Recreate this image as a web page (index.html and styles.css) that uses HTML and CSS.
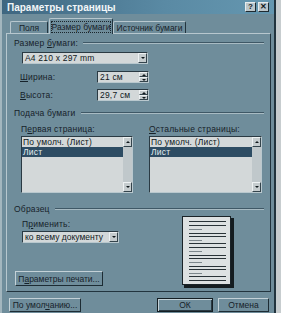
FILE: index.html
```html
<!DOCTYPE html>
<html lang="ru">
<head>
    <meta charset="UTF-8">
    <title>Параметры страницы</title>
    <link rel="stylesheet" href="styles.css">
</head>
<body>
<div class="dlg">
    <div class="titlebar">
        <span class="title">Параметры страницы</span>
        <div class="title-btns">
            <span class="tbtn">?</span>
            <span class="tbtn">&#x2715;</span>
        </div>
    </div>

    <div class="tabs">
        <div class="tab tab-fields">Поля</div>
        <div class="tab tab-active"><span class="focus">Размер бумаги</span></div>
        <div class="tab tab-source">Источник бумаги</div>
    </div>

    <div class="panel">
        <div class="group-head"><span>Размер <u>б</u>умаги:</span><span class="etch"></span></div>
        <div class="combo combo-size">
            <span class="combo-text">A4 210 x 297 mm</span>
            <span class="arrow-btn"><span class="tri-down"></span></span>
        </div>

        <div class="field-row row-width">
            <span class="field-label"><u>Ш</u>ирина:</span>
            <div class="spin">
                <span class="spin-text">21 см</span>
                <span class="spin-btns"><span class="sb"><span class="tri-up"></span></span><span class="sb"><span class="tri-down"></span></span></span>
            </div>
        </div>
        <div class="field-row row-height">
            <span class="field-label"><u>В</u>ысота:</span>
            <div class="spin">
                <span class="spin-text">29,7 см</span>
                <span class="spin-btns"><span class="sb"><span class="tri-up"></span></span><span class="sb"><span class="tri-down"></span></span></span>
            </div>
        </div>

        <div class="group-head head-feed"><span>Подача бумаги</span><span class="etch"></span></div>
        <div class="lists">
            <div class="list-col">
                <div class="list-label">П<u>е</u>рвая страница:</div>
                <div class="listbox">
                    <div class="items">
                        <div class="item">По умолч. (Лист)</div>
                        <div class="item item-sel">Лист</div>
                    </div>
                    <div class="vscroll">
                        <span class="sb"><span class="tri-up"></span></span>
                        <span class="track"></span>
                        <span class="sb"><span class="tri-down"></span></span>
                    </div>
                </div>
            </div>
            <div class="list-col list-right">
                <div class="list-label"><u>О</u>стальные страницы:</div>
                <div class="listbox listbox-wide">
                    <div class="items">
                        <div class="item">По умолч. (Лист)</div>
                        <div class="item item-sel">Лист</div>
                    </div>
                    <div class="vscroll">
                        <span class="sb"><span class="tri-up"></span></span>
                        <span class="track"></span>
                        <span class="sb"><span class="tri-down"></span></span>
                    </div>
                </div>
            </div>
        </div>

        <div class="group-head head-sample"><span>Образец</span><span class="etch"></span></div>
        <div class="sample">
            <div class="sample-left">
                <div class="apply-label">П<u>р</u>именить:</div>
                <div class="combo combo-apply">
                    <span class="combo-text">ко всему документу</span>
                    <span class="arrow-btn"><span class="tri-down"></span></span>
                </div>
                <button class="btn btn-print">П<u>а</u>раметры печати...</button>
            </div>
            <svg class="preview" width="52" height="72" viewBox="0 0 52 72">
                <rect x="2" y="2" width="50" height="70" fill="#141c20"/>
                <rect x="0.5" y="0.5" width="48" height="68" fill="#dde1e2" stroke="#1a2328"/>
                <g stroke="#2a3338" stroke-width="1">
                    <line x1="7" y1="5.5" x2="44" y2="5.5"/>
                    <line x1="7" y1="9.5" x2="44" y2="9.5"/>
                    <line x1="7" y1="17.5" x2="44" y2="17.5"/>
                    <line x1="7" y1="20.5" x2="44" y2="20.5"/>
                    <line x1="7" y1="27.5" x2="44" y2="27.5"/>
                    <line x1="7" y1="31.5" x2="44" y2="31.5"/>
                    <line x1="7" y1="39.5" x2="44" y2="39.5"/>
                    <line x1="7" y1="42.5" x2="44" y2="42.5"/>
                    <line x1="7" y1="50.5" x2="44" y2="50.5"/>
                    <line x1="7" y1="53.5" x2="44" y2="53.5"/>
                    <line x1="7" y1="60.5" x2="44" y2="60.5"/>
                    <line x1="7" y1="64.5" x2="44" y2="64.5"/>
                </g>
                <g stroke="#7d878c" stroke-width="1">
                    <line x1="7" y1="13.5" x2="20" y2="13.5"/>
                    <line x1="7" y1="24.5" x2="20" y2="24.5"/>
                    <line x1="7" y1="35.5" x2="20" y2="35.5"/>
                    <line x1="7" y1="46.5" x2="20" y2="46.5"/>
                    <line x1="7" y1="57.5" x2="20" y2="57.5"/>
                </g>
            </svg>
        </div>
    </div>

    <div class="footer">
        <button class="btn btn-default">По умол<u>ч</u>анию...</button>
        <span class="spacer"></span>
        <button class="btn btn-ok">ОК</button>
        <button class="btn btn-cancel">Отмена</button>
    </div>
</div>
</body>
</html>
```

FILE: styles.css
```css
/* Page behind the dialog */
body {
    margin: 0;
    background: #c7cdcf;
    font-family: "Liberation Sans", Arial, sans-serif;
    font-size: 8.5px;
    letter-spacing: 0.2px;
    color: #16222a;
}

u {
    text-decoration: underline;
    text-underline-offset: 1px;
}

/* Dialog frame */
.dlg {
    box-sizing: border-box;
    width: 276px;
    height: 313px;
    background: #6f8d9b;
    border-left: 2px solid #a3b6be;
    border-right: 2px solid #22343e;
    display: flex;
    flex-direction: column;
}

.titlebar {
    height: 14px;
    background: linear-gradient(to right, #3e6680, #5a8aa4 60%, #6597b0);
    display: flex;
    align-items: center;
    padding-left: 5px;
    padding-right: 5px;
}

.title {
    flex: 1;
    color: #f2f6f8;
    font-weight: bold;
    font-size: 10px;
    letter-spacing: 0;
}

.title-btns {
    display: flex;
    gap: 2px;
}

.tbtn {
    width: 11px;
    height: 10px;
    box-sizing: border-box;
    background: #bcc6ca;
    border: 1px solid;
    border-color: #e6ecee #1f2b31 #1f2b31 #e6ecee;
    font-size: 8px;
    font-weight: bold;
    line-height: 8px;
    letter-spacing: 0;
    text-align: center;
    color: #10181c;
}

/* Tabs */
.tabs {
    height: 19px;
    display: flex;
    align-items: flex-end;
    padding-left: 8px;
    letter-spacing: 0;
}

.tab {
    box-sizing: border-box;
    height: 12px;
    border: 1px solid;
    border-bottom: none;
    border-color: #b7c7ce #22343e #22343e #b7c7ce;
    border-radius: 2px 2px 0 0;
    display: flex;
    align-items: center;
    justify-content: center;
    white-space: nowrap;
}

.tab-fields {
    width: 38px;
}

.tab-active {
    width: 64px;
    height: 16px;
    margin-left: 1px;
    margin-bottom: -1px;
    position: relative;
    background: #6f8d9b;
    z-index: 1;
}

.tab-source {
    width: 73px;
}

.focus {
    outline: 1px dotted #1b262c;
    outline-offset: 0;
}

/* Tab panel */
.panel {
    box-sizing: border-box;
    margin-left: 4px;
    width: 265px;
    height: 259px;
    border: 1px solid;
    border-color: #b7c7ce #22343e #22343e #b7c7ce;
    padding: 4px 6px 0 7px;
}

.group-head {
    height: 10px;
    display: flex;
    align-items: center;
    gap: 5px;
    white-space: nowrap;
}

.etch {
    flex: 1;
    height: 1px;
    background: #3f5866;
    border-bottom: 1px solid #a8bbc3;
}

.combo, .spin {
    box-sizing: border-box;
    height: 12px;
    background: #d3d8d9;
    border: 1px solid;
    border-color: #2a3a43 #b9c8ce #b9c8ce #2a3a43;
    display: flex;
    align-items: center;
    color: #10181c;
}

.combo-text, .spin-text {
    flex: 1;
    padding-left: 2px;
    white-space: nowrap;
}

.combo-size {
    width: 126px;
    margin: 4px 0 0 8px;
}

.arrow-btn, .sb {
    box-sizing: border-box;
    width: 9px;
    height: 10px;
    background: #c5ccce;
    border: 1px solid;
    border-color: #eef2f3 #34444c #34444c #eef2f3;
    display: flex;
    align-items: center;
    justify-content: center;
    flex-shrink: 0;
}

.tri-down, .tri-up {
    width: 0;
    height: 0;
    border-left: 2px solid transparent;
    border-right: 2px solid transparent;
}

.tri-down {
    border-top: 2px solid #10181c;
}

.tri-up {
    border-bottom: 2px solid #10181c;
}

/* Width / height rows */
.field-row {
    display: flex;
    align-items: center;
    padding-left: 6px;
}

.row-width {
    margin-top: 7px;
}

.row-height {
    margin-top: 6px;
}

.field-label {
    width: 77px;
}

.spin {
    width: 52px;
}

.spin-btns {
    display: flex;
    flex-direction: column;
}

.spin .sb {
    height: 5px;
}

/* Paper feed */
.head-feed {
    margin-top: 7px;
}

.lists {
    display: flex;
    margin-top: 6px;
    padding-left: 7px;
}

.list-col {
    width: 128px;
}

.list-right {
    width: auto;
}

.list-label {
    height: 10px;
    line-height: 10px;
    white-space: nowrap;
}

.listbox {
    box-sizing: border-box;
    margin-top: 2px;
    width: 112px;
    height: 57px;
    background: #d3d8d9;
    border: 1px solid;
    border-color: #2a3a43 #b9c8ce #b9c8ce #2a3a43;
    display: flex;
}

.listbox-wide {
    width: 113px;
}

.items {
    flex: 1;
    color: #10181c;
}

.item {
    height: 10px;
    line-height: 10px;
    padding-left: 1px;
    white-space: nowrap;
}

.item-sel {
    background: #2d4c63;
    color: #e4ecef;
}

.vscroll {
    width: 9px;
    display: flex;
    flex-direction: column;
}

.track {
    flex: 1;
    background: #c0c8cb;
}

/* Sample */
.head-sample {
    margin-top: 11px;
}

.sample {
    display: flex;
    padding-top: 2px;
}

.sample-left {
    width: 168px;
    display: flex;
    flex-direction: column;
}

.apply-label {
    margin: 3px 0 0 8px;
    height: 10px;
    line-height: 10px;
}

.combo-apply {
    width: 97px;
    margin: 2px 0 0 8px;
    letter-spacing: 0;
}

.btn {
    box-sizing: border-box;
    height: 14px;
    padding: 0;
    background: #6f8d9b;
    border: 1px solid;
    border-color: #c3d1d7 #1d2c34 #1d2c34 #c3d1d7;
    font-family: inherit;
    font-size: 8.5px;
    letter-spacing: 0;
    color: #16222a;
    white-space: nowrap;
}

.btn-print {
    width: 88px;
    height: 15px;
    margin: 28px 0 0 1px;
}

.preview {
    display: block;
}

/* Bottom buttons */
.footer {
    display: flex;
    margin-top: 6px;
    padding: 0 5px 0 7px;
}

.spacer {
    flex: 1;
}

.btn-default {
    width: 72px;
}

.btn-ok {
    width: 56px;
    border: 1px solid #141e23;
    box-shadow: inset 1px 1px 0 #c3d1d7, inset -1px -1px 0 #2a3a43;
}

.btn-cancel {
    width: 51px;
    margin-left: 5px;
}
```
